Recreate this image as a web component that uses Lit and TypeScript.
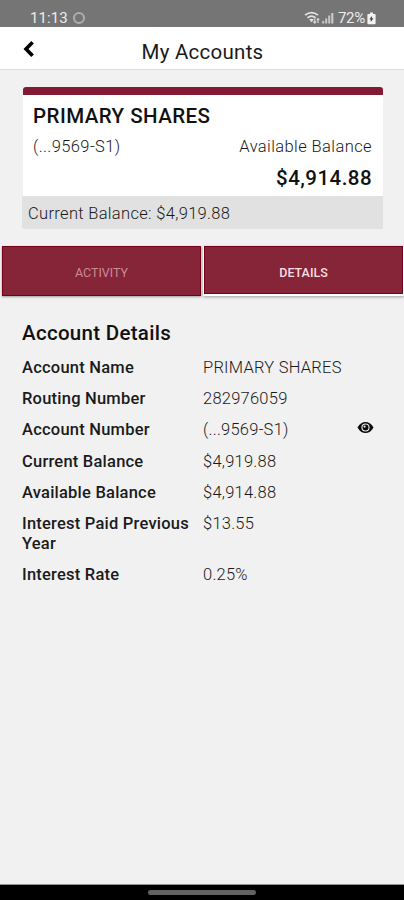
import { LitElement, html, css, svg } from "lit";
import { customElement } from "lit/decorators.js";

interface Detail {
  label: string;
  value: string;
  concealed?: boolean;
}

const details: Detail[] = [
  { label: "Account Name", value: "PRIMARY SHARES" },
  { label: "Routing Number", value: "282976059" },
  { label: "Account Number", value: "(...9569-S1)", concealed: true },
  { label: "Current Balance", value: "$4,919.88" },
  { label: "Available Balance", value: "$4,914.88" },
  { label: "Interest Paid Previous Year", value: "$13.55" },
  { label: "Interest Rate", value: "0.25%" },
];

@customElement("status-bar")
class StatusBar extends LitElement {
  static styles = css`
    :host { display: flex; align-items: center; height: 27px; padding: 9px 28px 0 30px; box-sizing: border-box; background: #757575; color: #ececec; font-size: 15px; line-height: 18px; }
    .time { letter-spacing: 0.1px; }
    .ring { width: 8px; height: 8px; border: 2.5px solid #aeaeae; border-radius: 50%; margin-left: 5px; }
    .icons { margin-left: auto; display: block; }
    .pct { margin-left: 3px; letter-spacing: -0.25px; }
    .battery { margin-left: 2px; display: block; }
  `;
  render() {
    return html`
      <span class="time">11:13</span><span class="ring"></span>
      <svg class="icons" width="31" height="14" viewBox="0 0 31 14">
        <g fill="none" stroke="#e2e2e2" stroke-width="1.7">
          <path d="M1 4.2Q7.5-1.1 14 4.2" /><path d="M3.4 6.8Q7.5 3.3 11.6 6.8" />
        </g>
        <path d="M5.2 8.6Q7.5 6.8 9.8 8.6L7.5 11.2Z" fill="#e2e2e2" />
        <path d="M10.8 7.6V12M9.4 10.5l1.4 1.5 1.4-1.5M14 12V7.8M12.8 9l1.2-1.4L15.2 9" stroke="#d4d4d4" stroke-width="1.2" fill="none" />
        <g fill="#c9c9c9">
          <path d="M18.2 10h2v2.5h-2zM21.2 7.5h2v5h-2zM24.2 4.5h2v8h-2zM27.2 2h2.2v10.5h-2.2z" />
        </g>
      </svg>
      <span class="pct">72%</span>
      <svg class="battery" width="9" height="13" viewBox="0 0 9 13">
        <path d="M3 .5h3v1.6h2q.6 0 .6.6v8.6q0 .9-.9.9H1.3q-.9 0-.9-.9V2.7q0-.6.6-.6h2z" fill="#f2f2f2" />
        <path d="M4.5 4.6 2.9 7.2h1L4 9.3 6 6.6H4.9z" fill="#444" stroke="#444" stroke-width=".5" />
      </svg>
    `;
  }
}

@customElement("account-card")
class AccountCard extends LitElement {
  static styles = css`
    :host { display: block; margin: 17px 21px 0 22px; }
    .body { margin: 0 0 0 1px; height: 109px; box-sizing: border-box; border-top: 8px solid #831a34; border-radius: 3px 3px 0 0; background: #fff; padding: 9px 11px 0 10px; }
    .name { font-size: 20.5px; line-height: 24px; font-weight: 500; color: #111; letter-spacing: 0.45px; }
    .row { display: flex; justify-content: space-between; margin-top: 9px; font-size: 16.5px; line-height: 20px; font-weight: 300; color: #1a1a1a; letter-spacing: 0.4px; }
    .amount { margin-top: 9px; text-align: right; font-size: 20.5px; line-height: 24px; font-weight: 500; color: #111; letter-spacing: 0.45px; }
    .foot { height: 33px; line-height: 35px; padding-left: 6px; background: #e1e1e1; border-radius: 0 0 2px 2px; font-size: 16.5px; font-weight: 300; color: #1a1a1a; letter-spacing: 0.32px; }
  `;
  render() {
    return html`
      <div class="body">
        <div class="name">PRIMARY SHARES</div>
        <div class="row"><span>(...9569-S1)</span><span>Available Balance</span></div>
        <div class="amount">$4,914.88</div>
      </div>
      <div class="foot">Current Balance: $4,919.88</div>
    `;
  }
}

@customElement("account-tabs")
class AccountTabs extends LitElement {
  static styles = css`
    :host { display: flex; gap: 3px; margin: 17px 1px 0 2px; align-items: flex-start; }
    .tab { flex: 1; height: 50px; box-sizing: border-box; border: 1px solid #75001a; background: #862438; text-align: center; font-size: 12.5px; line-height: 51px; box-shadow: 0 1px 2px rgba(0, 0, 0, 0.35); color: #c98c98; }
    .selected { height: 48px; color: #f8dfe1; font-weight: 500; box-shadow: 0 1px 0 1px #fff, 0 2px 3px 1px rgba(0, 0, 0, 0.35); }
  `;
  render() {
    return html`<div class="tab">ACTIVITY</div><div class="tab selected">DETAILS</div>`;
  }
}

@customElement("account-details")
class AccountDetails extends LitElement {
  static styles = css`
    :host { display: block; padding: 25px 30px 0 22px; }
    .title { font-size: 20.5px; line-height: 24px; font-weight: 500; color: #111; letter-spacing: 0.3px; }
    .list { display: flex; flex-direction: column; gap: 11.2px; margin-top: 13px; font-size: 16.5px; line-height: 20px; }
    .row { display: grid; grid-template-columns: 181px 1fr auto; }
    .label { font-weight: 500; color: #1b1b1b; letter-spacing: 0.22px; }
    .value { font-weight: 300; color: #1a1a1a; letter-spacing: 0.24px; }
    .eye { display: block; margin-top: 1px; }
  `;
  render() {
    const eye = svg`
      <path d="M.5 6.5Q3.6 1 8.5 1T16.5 6.5Q13.4 12 8.5 12T.5 6.5Z" fill="#0c0c0c" />
      <circle cx="8.5" cy="6.5" r="4.1" fill="#f1f1f1" />
      <circle cx="8.5" cy="6.5" r="3" fill="#0c0c0c" />
      <circle cx="7.6" cy="5.6" r="1.1" fill="#eee" />`;
    return html`
      <div class="title">Account Details</div>
      <div class="list">
        ${details.map(
          (d) => html`<div class="row">
            <span class="label">${d.label}</span><span class="value">${d.value}</span>
            ${d.concealed ? html`<svg class="eye" width="17" height="13" viewBox="0 0 17 13">${eye}</svg>` : null}
          </div>`
        )}
      </div>
    `;
  }
}

@customElement("app-root")
class AppRoot extends LitElement {
  static styles = css`
    :host { display: flex; flex-direction: column; height: 900px; background: #f1f1f1; font-family: Roboto, "Liberation Sans", sans-serif; overflow: hidden; }
    .header { display: grid; grid-template-columns: 60px 1fr 60px; align-items: center; height: 43px; box-sizing: border-box; border-bottom: 1px solid #dedede; background: #fff; flex: none; }
    .back { display: block; margin: 1px 0 0 22px; }
    .title { text-align: center; font-size: 20.5px; line-height: 24px; color: #1a1a1a; letter-spacing: 0.25px; padding: 7px 0 0 1px; }
    .nav { margin-top: auto; height: 16px; box-sizing: border-box; border-top: 1px solid #8f9492; background: #000; display: flex; justify-content: center; align-items: center; }
    .pill { width: 108px; height: 5px; border-radius: 3px; background: #626262; }
  `;
  render() {
    return html`
      <status-bar></status-bar>
      <div class="header">
        <svg class="back" width="14" height="18" viewBox="0 0 14 18">
          <path d="M10.6 2.2 4 9l6.6 6.8" fill="none" stroke="#000" stroke-width="3.6" />
        </svg>
        <div class="title">My Accounts</div>
      </div>
      <account-card></account-card>
      <account-tabs></account-tabs>
      <account-details></account-details>
      <div class="nav"><div class="pill"></div></div>
    `;
  }
}
